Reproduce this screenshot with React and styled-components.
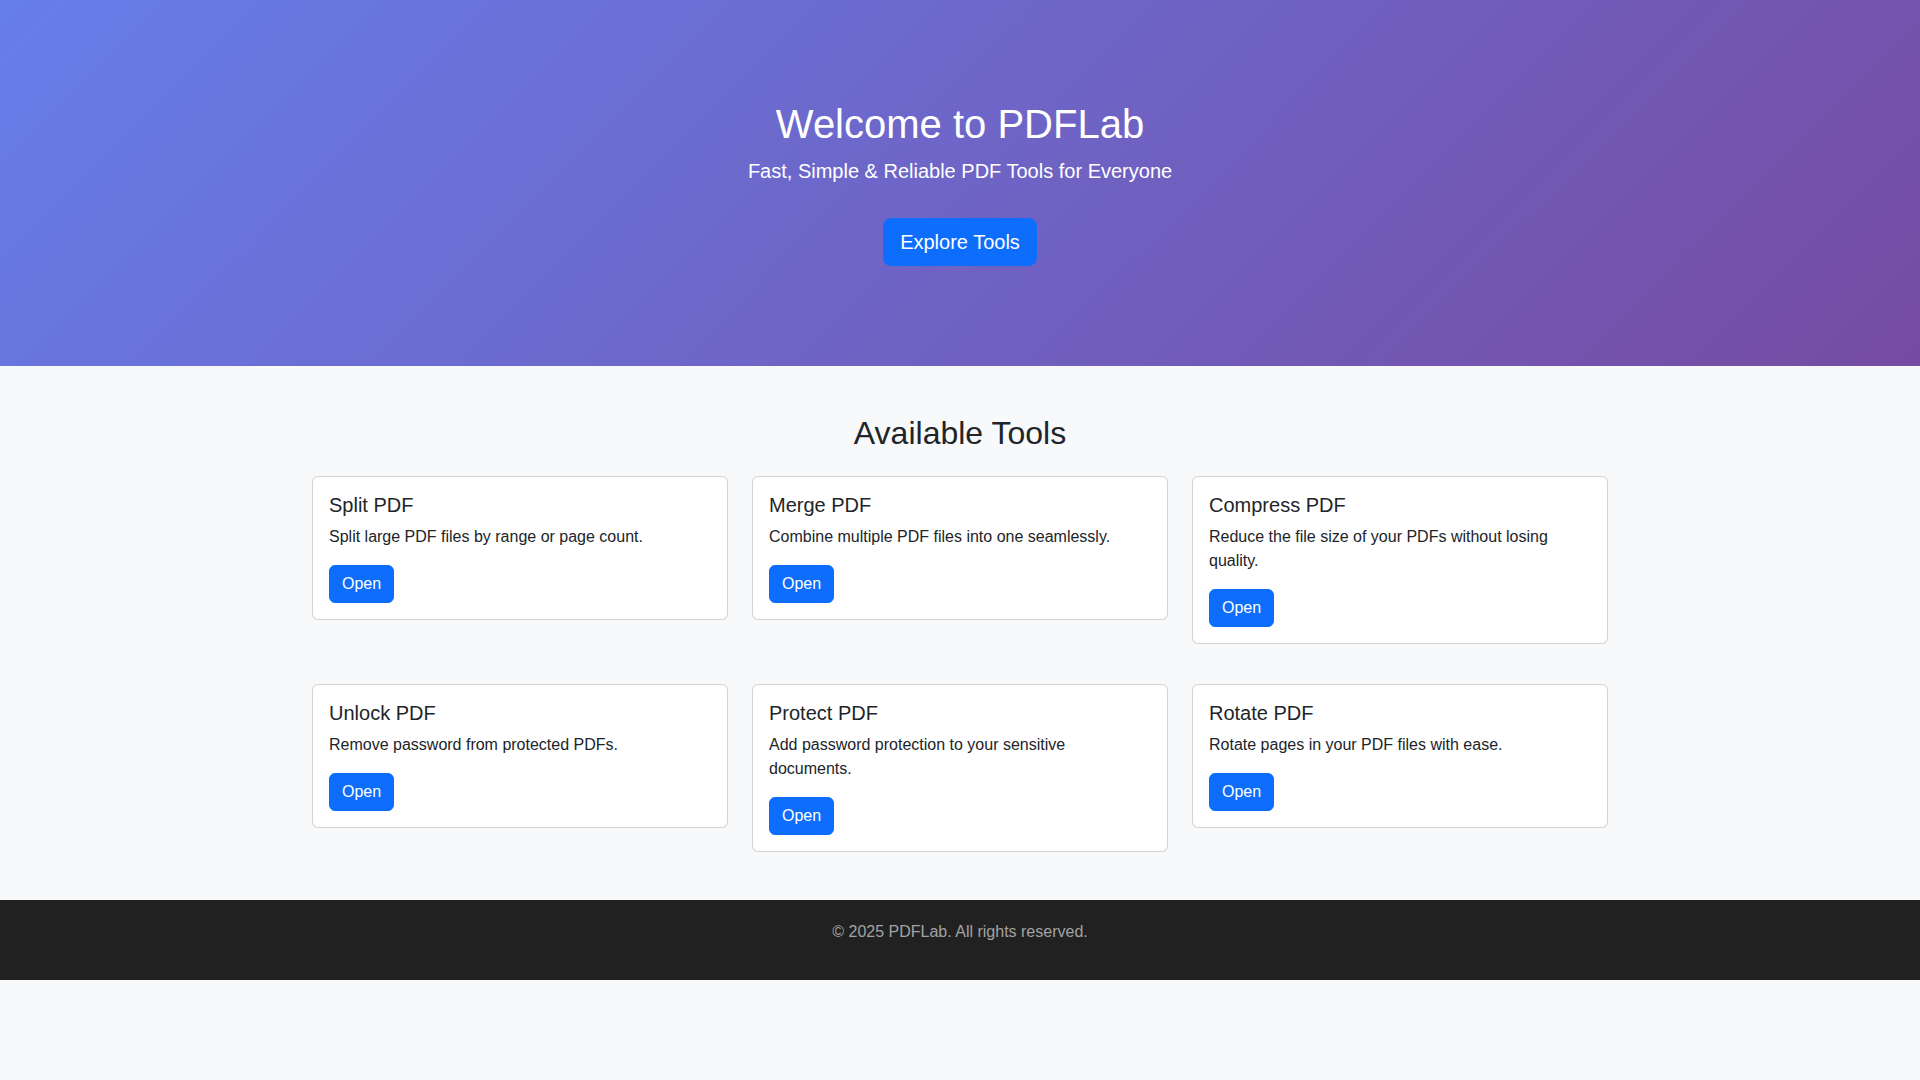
import styled, { createGlobalStyle } from 'styled-components'

const tools = [
  { title: 'Split PDF', text: 'Split large PDF files by range or page count.' },
  { title: 'Merge PDF', text: 'Combine multiple PDF files into one seamlessly.' },
  { title: 'Compress PDF', text: 'Reduce the file size of your PDFs without losing quality.' },
  { title: 'Unlock PDF', text: 'Remove password from protected PDFs.' },
  { title: 'Protect PDF', text: 'Add password protection to your sensitive documents.' },
  { title: 'Rotate PDF', text: 'Rotate pages in your PDF files with ease.' },
]

const App = () => {
  return (
    <>
      <GlobalStyle />
      <Hero>
        <HeroTitle>Welcome to PDFLab</HeroTitle>
        <Lead>Fast, Simple &amp; Reliable PDF Tools for Everyone</Lead>
        <Button $large>Explore Tools</Button>
      </Hero>
      <Tools>
        <Container>
          <SectionTitle>Available Tools</SectionTitle>
          <Grid>
            {tools.map((tool) => (
              <Card key={tool.title}>
                <CardTitle>{tool.title}</CardTitle>
                <CardText>{tool.text}</CardText>
                <Button>Open</Button>
              </Card>
            ))}
          </Grid>
        </Container>
      </Tools>
      <Footer>
        <FooterText>© 2025 PDFLab. All rights reserved.</FooterText>
      </Footer>
    </>
  )
}

const GlobalStyle = createGlobalStyle`
  * {
    box-sizing: border-box;
  }
  body {
    margin: 0;
    background: #f8f9fa;
    color: #212529;
    font-family: "Liberation Sans", Arial, sans-serif;
    font-size: 16px;
    line-height: 1.5;
  }
`

const Hero = styled.header`
  display: flex;
  flex-direction: column;
  align-items: center;
  padding: 100px 0;
  text-align: center;
  color: #fff;
  background: linear-gradient(135deg, #667eea 0%, #764ba2 100%);
`

const HeroTitle = styled.h1`
  margin: 0 0 8px;
  font-size: 40px;
  font-weight: 400;
  line-height: 1.2;
`

const Lead = styled.p`
  margin: 0 0 32px;
  font-size: 20px;
  line-height: 1.5;
`

const Button = styled.button`
  border: 1px solid #0d6efd;
  background: #0d6efd;
  color: #fff;
  font-family: inherit;
  font-size: ${(p) => (p.$large ? '20px' : '16px')};
  line-height: 1.5;
  padding: ${(p) => (p.$large ? '8px 16px' : '6px 12px')};
  border-radius: ${(p) => (p.$large ? '8px' : '6px')};
  cursor: pointer;
  align-self: ${(p) => (p.$large ? 'center' : 'flex-start')};
`

const Tools = styled.section`
  padding: 48px 0;
`

const Container = styled.div`
  width: 1296px;
  margin: 0 auto;
`

const SectionTitle = styled.h2`
  margin: 0 0 24px;
  text-align: center;
  font-size: 32px;
  font-weight: 400;
  line-height: 1.2;
`

const Grid = styled.div`
  display: grid;
  grid-template-columns: repeat(3, 1fr);
  column-gap: 24px;
  row-gap: 40px;
  align-items: start;
`

const Card = styled.div`
  display: flex;
  flex-direction: column;
  padding: 16px;
  background: #fff;
  border: 1px solid rgba(0, 0, 0, 0.175);
  border-radius: 6px;
`

const CardTitle = styled.h5`
  margin: 0 0 8px;
  font-size: 20px;
  font-weight: 400;
  line-height: 1.2;
`

const CardText = styled.p`
  margin: 0 0 16px;
`

const Footer = styled.footer`
  padding: 20px 0;
  background: #212121;
  text-align: center;
`

const FooterText = styled.p`
  margin: 0 0 16px;
  color: #a3a3a3;
`

export default App
